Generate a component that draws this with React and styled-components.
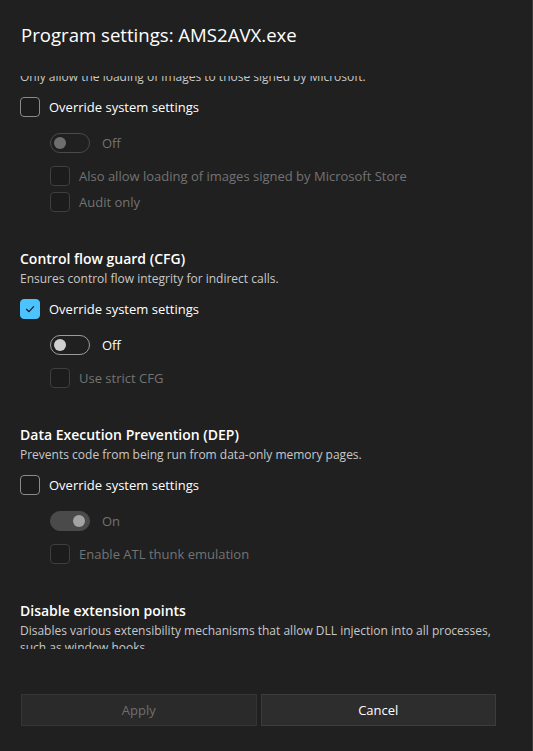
import React from 'react';
import styled, { createGlobalStyle } from 'styled-components';

const GlobalStyle = createGlobalStyle`
  body {
    margin: 0;
    background: #202020;
    font-family: "Open Sans", "Noto Sans", sans-serif;
    color: #ffffff;
  }
`;

const Dialog = styled.div`
  width: 533px;
  height: 751px;
  box-sizing: border-box;
  background: #202020;
  border-right: 1px solid #3a3a3a;
  display: flex;
  flex-direction: column;
`;

const Header = styled.div`
  height: 76px;
  box-sizing: border-box;
  padding: 21px 21px 0;
`;

const Title = styled.h1`
  margin: 0;
  font-size: 18.6px;
  font-weight: 400;
  line-height: 28px;
  color: #ffffff;
`;

const Viewport = styled.div`
  flex: 1;
  overflow: hidden;
  padding: 0 36px 0 20px;
`;

// scrolled content, offset by the current scroll position
const Content = styled.div`
  margin-top: -8px;
`;

const Section = styled.section`
  & + & {
    margin-top: 36px;
  }
`;

const Heading = styled.h2`
  margin: 0;
  font-size: 14px;
  font-weight: 600;
  line-height: 22px;
  color: #ffffff;
`;

const Description = styled.p`
  margin: 0;
  font-size: 12px;
  line-height: 17px;
  color: #c8c8c8;
`;

const Options = styled.div`
  display: flex;
  flex-direction: column;
  margin-top: 12px;
`;

const SubOptions = styled.div`
  display: flex;
  flex-direction: column;
  padding-left: 30px;
  margin-top: 16px;
`;

const Row = styled.label`
  display: flex;
  align-items: center;
  gap: 9px;
  height: 20px;
  font-size: 13px;
  color: ${p => (p.$disabled ? '#737373' : '#ffffff')};
  margin-top: ${p => p.$gap || 0}px;
`;

const Box = styled.span`
  width: 20px;
  height: 20px;
  box-sizing: border-box;
  border-radius: 4px;
  flex-shrink: 0;
  display: flex;
  align-items: center;
  justify-content: center;
  background: ${p => (p.$checked ? '#4cc2ff' : 'rgba(0,0,0,0.1)')};
  border: 1px solid ${p => (p.$checked ? '#4cc2ff' : p.$disabled ? '#3f3f3f' : '#8b8b8b')};
`;

const ToggleTrack = styled.span`
  position: relative;
  width: 40px;
  height: 20px;
  box-sizing: border-box;
  border-radius: 10px;
  flex-shrink: 0;
  margin-right: 3px;
  background: ${p => (p.$on ? '#4a4a4a' : 'transparent')};
  border: 1px solid ${p => (p.$on ? '#4a4a4a' : p.$disabled ? '#4a4a4a' : '#9c9c9c')};
`;

const Knob = styled.span`
  position: absolute;
  top: 3px;
  left: ${p => (p.$on ? '22px' : '3px')};
  width: 12px;
  height: 12px;
  border-radius: 50%;
  background: ${p => (p.$on ? '#a3a3a3' : p.$disabled ? '#6e6e6e' : '#cfcfcf')};
`;

const Footer = styled.div`
  display: grid;
  grid-template-columns: 1fr 1fr;
  gap: 4px;
  padding: 45px 36px 25px 21px;
`;

const Button = styled.button`
  height: 32px;
  border-radius: 0;
  font-family: inherit;
  font-size: 13px;
  background: ${p => (p.disabled ? '#2a2a2a' : '#2d2d2d')};
  border: 1px solid ${p => (p.disabled ? '#353535' : '#3c3c3c')};
  color: ${p => (p.disabled ? '#6f6f6f' : '#ffffff')};
`;

const Checkbox = ({ checked, disabled, label, gap }) => (
  <Row $disabled={disabled} $gap={gap}>
    <Box $checked={checked} $disabled={disabled}>
      {checked && (
        <svg width="12" height="12" viewBox="0 0 12 12">
          <path d="M2.5 6.3 L5 8.7 L9.6 3.6" fill="none" stroke="#1a1a1a" strokeWidth="1.2" strokeLinecap="round" strokeLinejoin="round" />
        </svg>
      )}
    </Box>
    {label}
  </Row>
);

const Toggle = ({ on, disabled }) => (
  <Row $disabled={disabled}>
    <ToggleTrack $on={on} $disabled={disabled}>
      <Knob $on={on} $disabled={disabled} />
    </ToggleTrack>
    {on ? 'On' : 'Off'}
  </Row>
);

// first section's heading is scrolled out of view
const sections = [
  {
    id: 'cig',
    desc: 'Only allow the loading of images to those signed by Microsoft.',
    override: false,
    toggle: { on: false, disabled: true },
    extras: ['Also allow loading of images signed by Microsoft Store', 'Audit only'],
  },
  {
    id: 'cfg',
    title: 'Control flow guard (CFG)',
    desc: 'Ensures control flow integrity for indirect calls.',
    override: true,
    toggle: { on: false, disabled: false },
    extras: ['Use strict CFG'],
  },
  {
    id: 'dep',
    title: 'Data Execution Prevention (DEP)',
    desc: 'Prevents code from being run from data-only memory pages.',
    override: false,
    toggle: { on: true, disabled: true },
    extras: ['Enable ATL thunk emulation'],
  },
];

export default function App() {
  return (
    <>
      <GlobalStyle />
      <Dialog>
        <Header>
          <Title>Program settings: AMS2AVX.exe</Title>
        </Header>
        <Viewport>
          <Content>
            {sections.map(s => (
              <Section key={s.id}>
                {s.title && <Heading>{s.title}</Heading>}
                <Description>{s.desc}</Description>
                <Options>
                  <Checkbox checked={s.override} label="Override system settings" />
                  <SubOptions>
                    <Toggle on={s.toggle.on} disabled={s.toggle.disabled} />
                    {s.extras.map((e, i) => (
                      <Checkbox key={e} disabled label={e} gap={i === 0 ? 13 : 6} />
                    ))}
                  </SubOptions>
                </Options>
              </Section>
            ))}
            <Section>
              <Heading>Disable extension points</Heading>
              <Description>
                Disables various extensibility mechanisms that allow DLL injection into all processes,
                such as window hooks.
              </Description>
            </Section>
          </Content>
        </Viewport>
        <Footer>
          <Button disabled>Apply</Button>
          <Button>Cancel</Button>
        </Footer>
      </Dialog>
    </>
  );
}
